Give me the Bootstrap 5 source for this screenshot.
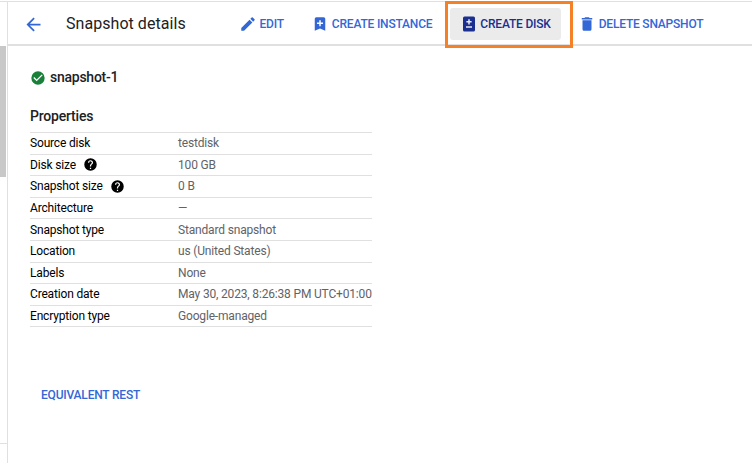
<!DOCTYPE html>
<html lang="en">
<head>
    <meta charset="UTF-8">
    <meta name="viewport" content="width=device-width, initial-scale=1.0">
    <title>Snapshot details</title>
    <link href="https://cdn.jsdelivr.net/npm/bootstrap@5.3.0/dist/css/bootstrap.min.css" rel="stylesheet">
    <style>
        html, body { height: 100%; }
        body { font-family: Roboto, "Liberation Sans", sans-serif; color: #202124; overflow: hidden; background: #fff; }
        .page-shell { height: 462px; margin-top: 1px; border-top: 1px solid #e0e0e0; }
        .side-rail { width: 8px; border-right: 1px solid #e0e0e0; }
        .rail-thumb { height: 131px; margin-top: 44px; background: #c8c8c8; margin-right: 1px; }
        .rail-line { margin-top: 266px; border-top: 1px solid #e0e0e0; }
        .head-bar { height: 44px; border-bottom: 2px solid #e0e0e0; position: relative; }
        .back-link { margin: 2px 0 0 15px; width: 21px; line-height: 0; }
        .head-title { font-size: 16px; margin: 2px 0 0 22px; width: 163px; white-space: nowrap; letter-spacing: .05px; }
        .act-row { gap: 7.5px; }
        .act-btn { font-size: 12px; font-weight: 500; letter-spacing: -.2px; gap: 2.5px; color: #3367d6; height: 32px; padding: 0 10px; border: 0; background: none; border-radius: 3px; margin-top: 6px; white-space: nowrap; }
        .act-btn svg { fill: #3367d6; }
        .act-btn.is-active { background: #ebebeb; color: #1a2f8f; }
        .act-btn.is-active svg { fill: #1a2f8f; }
        .mark-box { position: absolute; left: 437px; top: -1px; width: 128px; height: 47px; border: 3px solid #f58025; pointer-events: none; }
        .main-pane { padding: 22px 0 0 22px; }
        .snap-name { font-size: 14px; font-weight: 500; letter-spacing: -.25px; height: 19px; }
        .props-title { font-size: 14px; font-weight: 500; letter-spacing: -.2px; margin-top: 19px; height: 20px; line-height: 20px; }
        .props-table { width: 342px; margin-top: 6px; border-top: 1px solid #e0e0e0; font-size: 12px; letter-spacing: -.17px; }
        .prop-row { height: 21.6px; border-bottom: 1px solid #e0e0e0; white-space: nowrap; }
        .prop-key { width: 148px; flex-shrink: 0; color: #000; gap: 7.5px; }
        .prop-val { color: #5f6368; }
        .rest-link { display: block; margin: 59px 0 0 11px; font-size: 12px; font-weight: 500; letter-spacing: -.2px; color: #3367d6; text-decoration: none; }
    </style>
</head>
<body>
    <div class="page-shell d-flex">
        <div class="side-rail flex-shrink-0">
            <div class="rail-thumb"></div>
            <div class="rail-line"></div>
        </div>
        <div class="flex-grow-1">
            <div class="head-bar d-flex align-items-center">
                <a class="back-link" href="#">
                    <svg width="21" height="21" viewBox="0 0 24 24" fill="#3367d6"><path d="M20 11H7.830l5.590-5.590L12 4l-8 8 8 8 1.410-1.410L7.830 13H20z"/></svg>
                </a>
                <div class="head-title">Snapshot details</div>
                <div class="act-row d-flex align-self-start">
                    <button class="act-btn d-flex align-items-center" type="button">
                        <svg width="18" height="18" viewBox="0 0 24 24"><path d="M3 17.250V21h3.750L17.810 9.940l-3.750-3.750L3 17.250zM20.710 7.040a1 1 0 0 0 0-1.410l-2.340-2.340a1 1 0 0 0-1.410 0l-1.830 1.830 3.750 3.750 1.830-1.830z"/></svg>
                        EDIT
                    </button>
                    <button class="act-btn d-flex align-items-center" type="button">
                        <svg width="18" height="18" viewBox="0 0 24 24"><path d="M17 3H7a2 2 0 0 0-2 2v16l7-3 7 3V5a2 2 0 0 0-2-2zm-1 9h-3v3h-2v-3H8v-2h3V7h2v3h3z"/></svg>
                        CREATE INSTANCE
                    </button>
                    <button class="act-btn is-active d-flex align-items-center" type="button">
                        <svg width="18" height="18" viewBox="0 0 24 24"><path d="M18 2H6a2 2 0 0 0-2 2v16a2 2 0 0 0 2 2h12a2 2 0 0 0 2-2V4a2 2 0 0 0-2-2zm-5 6h2.500v2H13v2.500h-2V10H8.500V8H11V5.500h2zM16 17H8v-2h8z"/></svg>
                        CREATE DISK
                    </button>
                    <button class="act-btn d-flex align-items-center" type="button">
                        <svg width="18" height="18" viewBox="0 0 24 24"><path d="M6 19a2 2 0 0 0 2 2h8a2 2 0 0 0 2-2V7H6v12zM19 4h-3.500l-1-1h-5l-1 1H5v2h14V4z"/></svg>
                        DELETE SNAPSHOT
                    </button>
                </div>
                <div class="mark-box"></div>
            </div>
            <div class="main-pane">
                <div class="snap-name d-flex align-items-center gap-1">
                    <svg width="16" height="16" viewBox="0 0 24 24"><path fill="#188038" d="M12 2a10 10 0 1 0 0 20 10 10 0 0 0 0-20zm-2 15-5-5 1.410-1.410L10 14.170l7.590-7.590L19 8z"/></svg>
                    snapshot-1
                </div>
                <div class="props-title">Properties</div>
                <div class="props-table">
                    <div class="prop-row d-flex align-items-center"><div class="prop-key">Source disk</div><div class="prop-val">testdisk</div></div>
                    <div class="prop-row d-flex align-items-center"><div class="prop-key d-flex align-items-center">Disk size <svg width="15" height="15" viewBox="0 0 24 24"><path fill="#000" d="M12 2a10 10 0 1 0 0 20 10 10 0 0 0 0-20zm1 17h-2v-2h2zm2.070-7.750-.9.920C13.450 12.900 13 13.500 13 15h-2v-.5c0-1.100.45-2.100 1.170-2.830l1.240-1.260A2 2 0 1 0 10 9H8a4 4 0 1 1 8 0c0 .88-.36 1.680-.93 2.250z"/></svg></div><div class="prop-val">100 GB</div></div>
                    <div class="prop-row d-flex align-items-center"><div class="prop-key d-flex align-items-center">Snapshot size <svg width="15" height="15" viewBox="0 0 24 24"><path fill="#000" d="M12 2a10 10 0 1 0 0 20 10 10 0 0 0 0-20zm1 17h-2v-2h2zm2.070-7.750-.9.920C13.450 12.900 13 13.500 13 15h-2v-.5c0-1.100.45-2.100 1.170-2.830l1.240-1.260A2 2 0 1 0 10 9H8a4 4 0 1 1 8 0c0 .88-.36 1.680-.93 2.250z"/></svg></div><div class="prop-val">0 B</div></div>
                    <div class="prop-row d-flex align-items-center"><div class="prop-key">Architecture</div><div class="prop-val">—</div></div>
                    <div class="prop-row d-flex align-items-center"><div class="prop-key">Snapshot type</div><div class="prop-val">Standard snapshot</div></div>
                    <div class="prop-row d-flex align-items-center"><div class="prop-key">Location</div><div class="prop-val">us (United States)</div></div>
                    <div class="prop-row d-flex align-items-center"><div class="prop-key">Labels</div><div class="prop-val">None</div></div>
                    <div class="prop-row d-flex align-items-center"><div class="prop-key">Creation date</div><div class="prop-val">May 30, 2023, 8:26:38 PM UTC+01:00</div></div>
                    <div class="prop-row d-flex align-items-center"><div class="prop-key">Encryption type</div><div class="prop-val">Google-managed</div></div>
                </div>
                <a class="rest-link" href="#">EQUIVALENT REST</a>
            </div>
        </div>
    </div>
    <script src="https://cdn.jsdelivr.net/npm/bootstrap@5.3.0/dist/js/bootstrap.bundle.min.js"></script>
</body>
</html>
